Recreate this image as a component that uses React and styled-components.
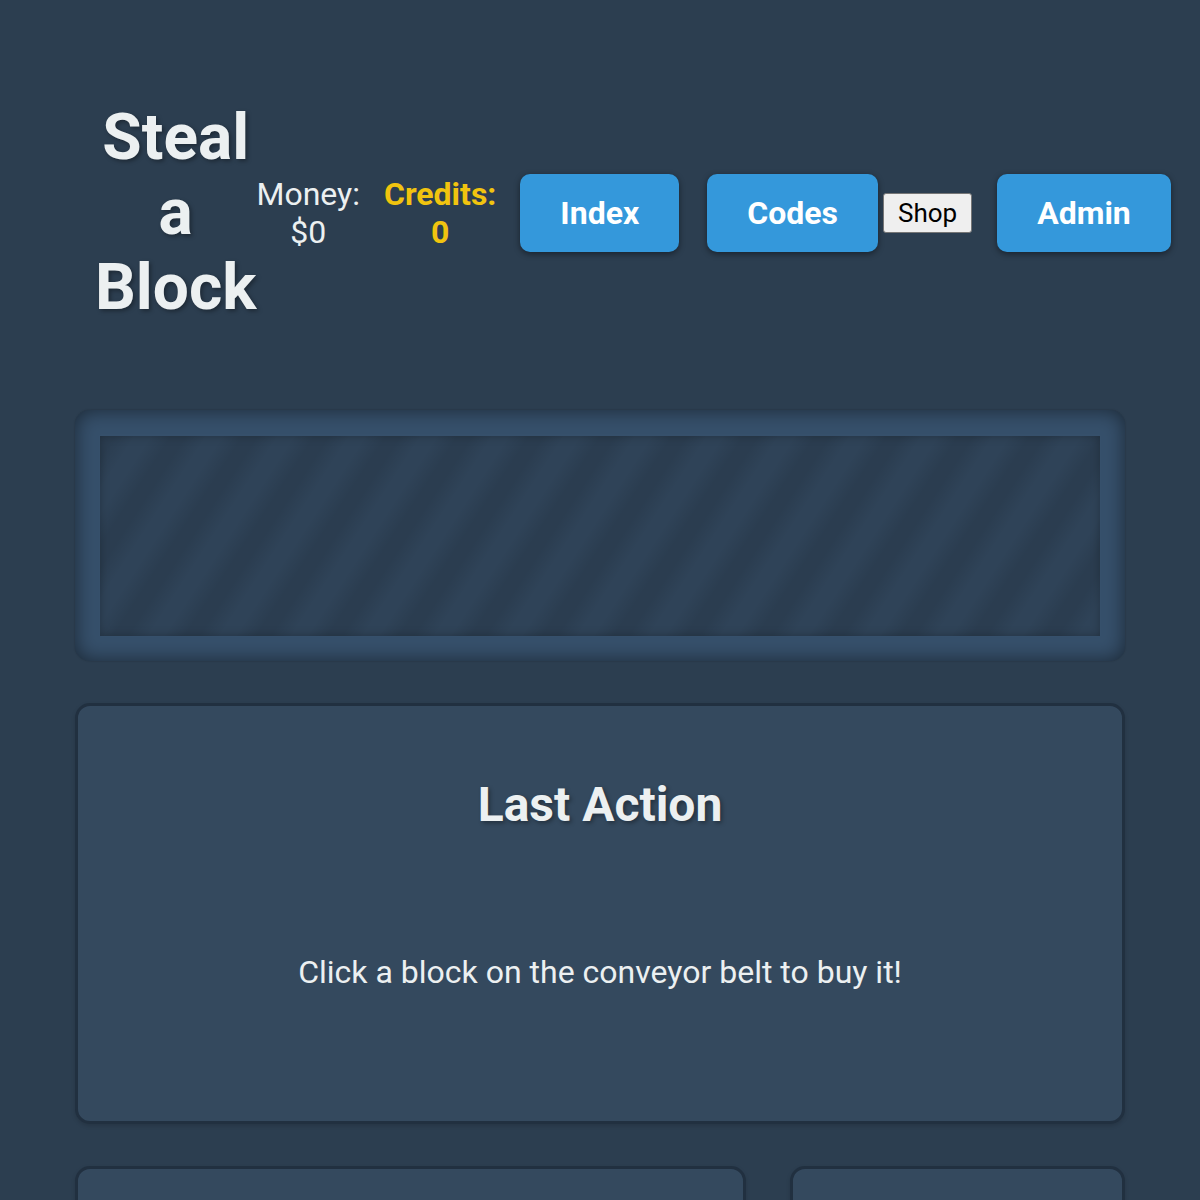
import styled, { createGlobalStyle } from "styled-components";

const GlobalStyle = createGlobalStyle`
  html, body {
    margin: 0;
    padding: 0;
    background: #2c3e50;
    overflow-x: hidden;
  }
  body {
    font-family: Roboto, "Liberation Sans", sans-serif;
    color: #ecf0f1;
  }
`;

const Page = styled.div`
  max-width: 1050px;
  margin: 0 auto;
  padding: 20px 0;
`;

const Header = styled.header`
  display: flex;
  align-items: center;
  padding-top: 80px;
  margin-bottom: 85px;
`;

const Title = styled.h1`
  margin: 0 0 0 20px;
  width: min-content;
  font-size: 64px;
  font-weight: 700;
  text-align: center;
  color: #ecf0f1;
  text-shadow: 2px 2px 4px rgba(0, 0, 0, 0.35);
`;

const Stat = styled.div`
  width: min-content;
  margin-left: ${(p) => p.$gap || 0}px;
  font-size: 32px;
  text-align: center;
  flex-shrink: 0;
  font-weight: ${(p) => (p.$accent ? 700 : 400)};
  color: ${(p) => (p.$accent ? "#f1c40f" : "#ecf0f1")};
`;

const NavButton = styled.button`
  flex-shrink: 0;
  margin-left: ${(p) => p.$gap}px;
  padding: 20px 40px;
  border: none;
  border-radius: 10px;
  background: #3498db;
  color: #fff;
  font-family: Roboto, "Liberation Sans", sans-serif;
  font-size: 32px;
  font-weight: 700;
  white-space: nowrap;
  cursor: pointer;
  box-shadow: 0 2px 6px rgba(0, 0, 0, 0.45);
`;

const PlainButton = styled.button`
  flex-shrink: 0;
  margin-left: ${(p) => p.$gap}px;
  padding: 4px 14px;
  background: #efefef;
  border: 1px solid #767676;
  border-radius: 3px;
  color: #000;
  font-family: Roboto, "Liberation Sans", sans-serif;
  font-size: 26px;
  cursor: pointer;
`;

const ConveyorFrame = styled.section`
  padding: 26px 25px 25px;
  margin-bottom: 42px;
  border-radius: 15px;
  background: #36506b;
  box-shadow: inset 0 0 20px rgba(0, 0, 0, 0.5), 0 0 2px rgba(0, 0, 0, 0.25);
`;

/* soft diagonal stripes of the belt */
const Belt = styled.div`
  height: 200px;
  background-color: #2f4358;
  background-image: repeating-linear-gradient(
    123deg,
    rgba(0, 0, 0, 0.09) 0,
    rgba(0, 0, 0, 0.09) 12px,
    rgba(0, 0, 0, 0) 30px,
    rgba(0, 0, 0, 0) 42px,
    rgba(0, 0, 0, 0.09) 60px
  );
  box-shadow: inset 0 0 10px rgba(0, 0, 0, 0.25);
`;

const Panel = styled.section`
  box-sizing: border-box;
  min-height: ${(p) => p.$minHeight || 0}px;
  padding: 30px;
  border: 3px solid #213040;
  border-radius: 15px;
  background: #34495e;
  text-align: center;
  box-shadow: 0 2px 4px rgba(0, 0, 0, 0.15);
`;

const PanelTitle = styled.h2`
  margin: 40px 0 0;
  font-size: 48px;
  font-weight: 700;
  color: #ecf0f1;
  text-shadow: 2px 2px 4px rgba(0, 0, 0, 0.35);
`;

const ActionSlot = styled.div`
  min-height: 100px;
  margin: 10px 0;
`;

const Hint = styled.p`
  margin: 10px 0 0;
  font-size: 32px;
  color: #ecf0f1;
`;

const BottomGrid = styled.div`
  display: grid;
  grid-template-columns: 2fr 1fr;
  gap: 44px;
  margin-top: 42px;
`;

export default function App() {
  return (
    <>
      <GlobalStyle />
      <Page>
        <Header>
          <Title>Steal a Block</Title>
          <Stat>Money: $0</Stat>
          <Stat $accent $gap={24}>Credits: 0</Stat>
          <NavButton $gap={24}>Index</NavButton>
          <NavButton $gap={28}>Codes</NavButton>
          <PlainButton $gap={5}>Shop</PlainButton>
          <NavButton $gap={25}>Admin</NavButton>
        </Header>

        <ConveyorFrame>
          <Belt />
        </ConveyorFrame>

        <Panel $minHeight={421}>
          <PanelTitle>Last Action</PanelTitle>
          <ActionSlot />
          <Hint>Click a block on the conveyor belt to buy it!</Hint>
        </Panel>

        <BottomGrid>
          <Panel $minHeight={300} />
          <Panel $minHeight={300} />
        </BottomGrid>
      </Page>
    </>
  );
}
